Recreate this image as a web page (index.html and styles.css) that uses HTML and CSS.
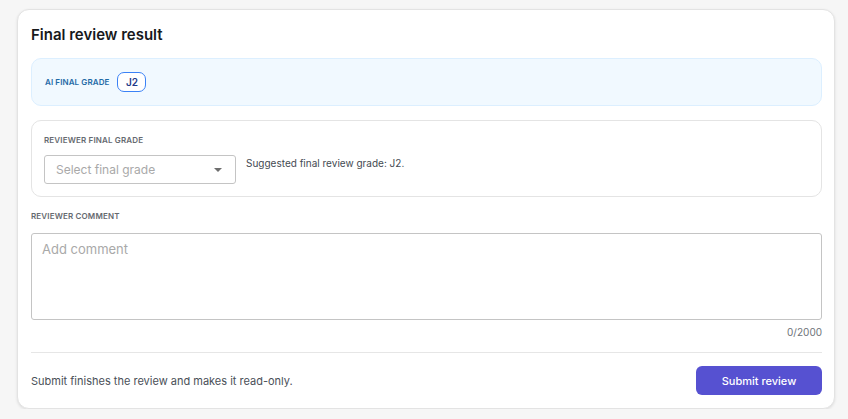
FILE: index.html
```html
<!DOCTYPE html>
<html>
	<head>
		<meta charset="UTF-8">
		<title>Final review result</title>
		<link rel="stylesheet" href="styles.css">
	</head>
	<body>
		<div class="card">
			<h2 class="title">Final review result</h2>

			<div class="ai-box">
				<span class="ai-label">AI final grade</span>
				<span class="badge">J2</span>
			</div>

			<div class="grade-box">
				<div class="label">Reviewer final grade</div>
				<div class="grade-row">
					<div class="select">
						<span>Select final grade</span>
						<i class="caret"></i>
					</div>
					<p class="hint">Suggested final review grade: J2.</p>
				</div>
			</div>

			<div class="label comment-label">Reviewer comment</div>
			<textarea class="comment" placeholder="Add comment"></textarea>
			<div class="counter">0/2000</div>

			<div class="footer">
				<p>Submit finishes the review and makes it read-only.</p>
				<button class="submit">Submit review</button>
			</div>
		</div>
	</body>
</html>
```

FILE: styles.css
```css
body {
	margin: 0;
	background-color: #f6f6f6;
	font-family: Inter, "Liberation Sans", sans-serif;
	color: #1f2328;
}

.card {
	margin: 9px 0 0 17px;
	width: 818px;
	height: 400px;
	box-sizing: border-box;
	padding: 15px 12px 14px 13px;
	background-color: #fff;
	border: 1px solid #e3e3e3;
	border-radius: 12px;
	box-shadow: 0 1px 3px rgba(0, 0, 0, 0.1);
}

.title {
	margin: 0;
	font-size: 15px;
	line-height: 20px;
	font-weight: 600;
	color: #17191c;
}

.ai-box {
	margin-top: 13px;
	height: 48px;
	box-sizing: border-box;
	padding: 0 13px;
	display: flex;
	align-items: center;
	gap: 8px;
	background-color: #f1f9ff;
	border: 1px solid #dcefff;
	border-radius: 10px;
}

.ai-label {
	font-size: 8px;
	font-weight: 600;
	letter-spacing: 0.1px;
	text-transform: uppercase;
	color: #1f6aa6;
}

.badge {
	width: 29px;
	height: 20px;
	box-sizing: border-box;
	display: flex;
	align-items: center;
	justify-content: center;
	border: 1px solid #3b82f6;
	border-radius: 7px;
	background-color: #fff;
	font-size: 10px;
	font-weight: 600;
	color: #1e3a8a;
}

.grade-box {
	margin-top: 14px;
	height: 77px;
	box-sizing: border-box;
	padding: 14px 12px 0 12px;
	border: 1px solid #e4e4e4;
	border-radius: 10px;
}

.label {
	font-size: 8px;
	line-height: 10px;
	font-weight: 600;
	letter-spacing: 0.15px;
	text-transform: uppercase;
	color: #666a70;
}

.grade-row {
	margin-top: 10px;
	display: flex;
	gap: 10px;
}

.select {
	width: 192px;
	height: 29px;
	box-sizing: border-box;
	padding: 0 11px;
	display: flex;
	align-items: center;
	justify-content: space-between;
	border: 1px solid #c4c4c4;
	border-radius: 3px;
	font-size: 12px;
	color: #a9a9a9;
}

.caret {
	width: 0;
	height: 0;
	margin-right: 2px;
	border-left: 4px solid transparent;
	border-right: 4px solid transparent;
	border-top: 4px solid #6e6e6e;
}

.hint {
	margin: 0;
	padding-top: 2px;
	font-size: 10px;
	line-height: 12px;
	color: #444a52;
}

.comment-label {
	margin-top: 14px;
}

.comment {
	display: block;
	margin-top: 12px;
	width: 100%;
	height: 87px;
	box-sizing: border-box;
	padding: 7px 10px;
	border: 1px solid #c4c4c4;
	border-radius: 3px;
	resize: none;
	font-family: Inter, "Liberation Sans", sans-serif;
	font-size: 13px;
	color: #333;
}

.comment::placeholder {
	color: #a9a9a9;
}

.counter {
	margin-top: 6px;
	text-align: right;
	font-size: 10px;
	line-height: 12px;
	color: #6e7379;
}

.footer {
	margin-top: 14px;
	padding-top: 13px;
	border-top: 1px solid #e6e6e6;
	display: flex;
	align-items: center;
	justify-content: space-between;
}

.footer p {
	margin: 0;
	font-size: 11px;
	color: #4a5058;
}

.submit {
	width: 126px;
	height: 29px;
	border: 0;
	border-radius: 6px;
	background-color: #5651d1;
	color: #fff;
	font-family: Inter, "Liberation Sans", sans-serif;
	font-size: 11px;
	font-weight: 500;
}
```
